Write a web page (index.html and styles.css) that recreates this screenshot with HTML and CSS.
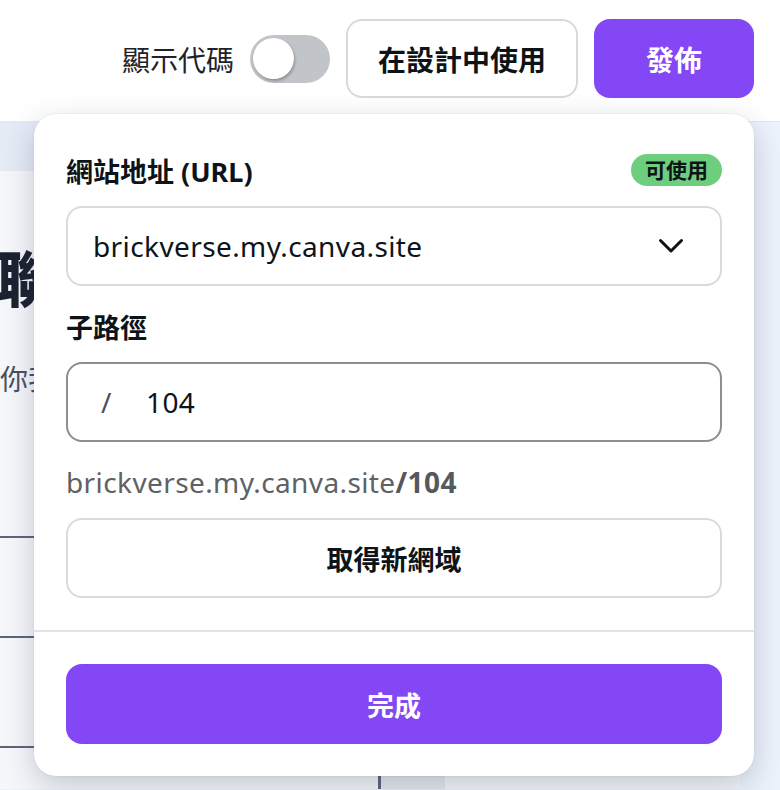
FILE: index.html
```html
<!DOCTYPE html>
<html lang="zh-Hant">
<head>
<meta charset="utf-8">
<title>發佈</title>
<link rel="stylesheet" href="styles.css">
</head>
<body>
<header class="topbar">
  <span class="toggle-label">顯示代碼</span>
  <span class="toggle"><span class="knob"></span></span>
  <button class="btn btn-outline">在設計中使用</button>
  <button class="btn btn-primary">發佈</button>
</header>
<main class="stage">
  <section class="doc">
    <h1 class="doc-title">聯</h1>
    <p class="doc-text">你我</p>
    <div class="doc-row doc-row-first"></div>
    <div class="doc-row"></div>
    <div class="doc-row doc-row-last"><span class="col-gap"></span><span class="col-line"></span><span class="col-block"></span></div>
  </section>
</main>

<div class="popover">
  <div class="pop-body">
    <div class="field-head">
      <span class="label">網站地址 (URL)</span>
      <span class="badge">可使用</span>
    </div>
    <div class="box select">
      <span class="box-text latin">brickverse.my.canva.site</span>
      <svg class="chev" width="26" height="16" viewBox="0 0 26 16"><polyline points="2.5,2.5 13,13 23.5,2.5" fill="none" stroke="#0e1318" stroke-width="3" stroke-linecap="round" stroke-linejoin="round"/></svg>
    </div>
    <div class="field-head field-gap">
      <span class="label">子路徑</span>
    </div>
    <div class="box path">
      <span class="slash">/</span>
      <span class="box-text latin">104</span>
    </div>
    <p class="helper latin">brickverse.my.canva.site<b>/104</b></p>
    <button class="box ghost">取得新網域</button>
  </div>
  <div class="divider"></div>
  <div class="pop-foot">
    <button class="done">完成</button>
  </div>
</div>
</body>
</html>
```

FILE: styles.css
```css
* { box-sizing: border-box; }
html, body { margin: 0; padding: 0; }
body {
  width: 780px;
  height: 790px;
  overflow: hidden;
  background: #ebf2fb;
  font-family: "Noto Sans", "Noto Sans CJK TC", sans-serif;
  color: #0e1318;
  position: relative;
}
button { font-family: inherit; cursor: pointer; }
.latin { letter-spacing: 0.4px; }

.topbar {
  height: 122px;
  background: #ffffff;
  display: flex;
  align-items: center;
  justify-content: flex-end;
  padding: 0 26px 4px 0;
  border-bottom: 1px solid #e3e8ef;
}
.toggle-label {
  font-size: 28px;
  color: #1f2328;
  margin-right: 16px;
}
.toggle {
  width: 80px;
  height: 48px;
  border-radius: 24px;
  background: #c1c5ca;
  display: flex;
  align-items: center;
  padding-left: 3px;
  margin-right: 16px;
}
.knob {
  width: 41px;
  height: 41px;
  border-radius: 50%;
  background: #ffffff;
  box-shadow: 1px 2px 3px rgba(0,0,0,0.28);
}
.btn {
  height: 79px;
  border-radius: 16px;
  font-size: 28px;
  font-weight: 700;
}
.btn-outline {
  width: 232px;
  background: #ffffff;
  border: 2px solid #d6dae0;
  color: #0e1318;
  margin-right: 16px;
}
.btn-primary {
  width: 160px;
  background: #8447f5;
  border: none;
  color: #ffffff;
}

.stage {
  padding-top: 49px;
  background: linear-gradient(90deg, #e4ebf5 0%, #edf3fc 100%);
  height: 667px;
}
.doc {
  width: 740px;
  height: 100%;
  background: #f5f7fa;
  padding-top: 72px;
  overflow: hidden;
}
.doc-title {
  margin: 0 0 0 -3px;
  font-size: 60px;
  line-height: 72px;
  font-weight: 800;
  color: #1b2230;
}
.doc-text {
  margin: 46px 0 0 0;
  font-size: 28px;
  line-height: 36px;
  color: #4a5160;
}
.doc-row {
  height: 100px;
  border-top: 2px solid #5b6579;
}
.doc-row-first { margin-top: 139px; }
.doc-row + .doc-row { height: 110px; }
.doc-row-last {
  display: flex;
  height: 60px;
}
.col-gap { width: 378px; }
.col-line { width: 3px; background: #5b6480; }
.col-block { width: 64px; background: #e6e8ec; }

.popover {
  position: absolute;
  left: 34px;
  top: 114px;
  width: 720px;
  background: #ffffff;
  border-radius: 22px;
  box-shadow: 0 10px 30px rgba(40, 55, 85, 0.24), 0 0 2px rgba(40,55,85,0.12);
}
.pop-body {
  padding: 40px 32px 32px;
  display: flex;
  flex-direction: column;
}
.field-head {
  height: 32px;
  display: flex;
  align-items: center;
  justify-content: space-between;
  margin-bottom: 20px;
}
.field-gap { margin-top: 24px; }
.label {
  font-size: 27px;
  font-weight: 700;
  color: #0e1318;
}
.badge {
  height: 32px;
  padding: 0 14px;
  border-radius: 16px;
  background: #6dcf7e;
  font-size: 21px;
  font-weight: 700;
  line-height: 32px;
  color: #0e1318;
}
.box {
  height: 80px;
  border: 2px solid #d7dbe1;
  border-radius: 16px;
  background: #ffffff;
  display: flex;
  align-items: center;
}
.select {
  padding: 0 36px 0 25px;
  justify-content: space-between;
}
.box-text {
  font-size: 28px;
  color: #0e1318;
}
.chev { display: block; }
.path {
  border-color: #8b8e93;
  padding-left: 33px;
}
.slash {
  font-size: 28px;
  color: #4d5157;
  width: 45px;
}
.helper {
  margin: 24px 0 20px 0;
  height: 32px;
  line-height: 32px;
  font-size: 28px;
  color: #5e6166;
}
.helper b { font-weight: 700; color: #55585d; }
.ghost {
  justify-content: center;
  font-size: 27px;
  font-weight: 700;
  color: #0e1318;
  width: 100%;
}
.divider {
  height: 2px;
  background: #e1e4e9;
}
.pop-foot {
  padding: 32px;
}
.done {
  width: 100%;
  height: 80px;
  border: none;
  border-radius: 16px;
  background: #8447f5;
  color: #ffffff;
  font-size: 27px;
  font-weight: 700;
}
```
